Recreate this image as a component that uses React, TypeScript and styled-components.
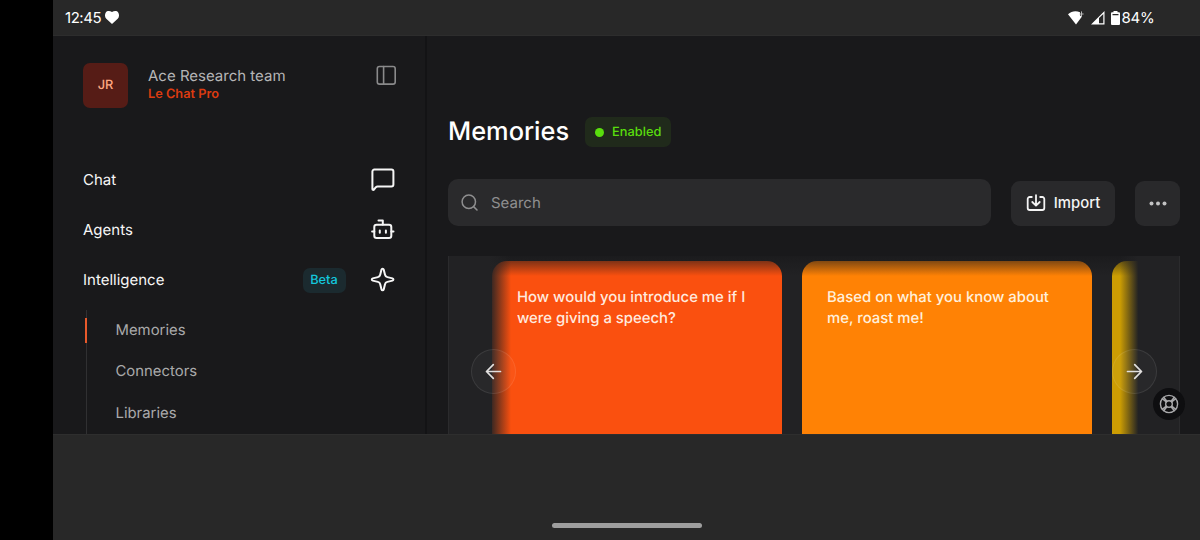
import React from "react";
import styled, { createGlobalStyle } from "styled-components";

const GlobalStyle = createGlobalStyle`
  * { box-sizing: border-box; }
  body {
    margin: 0;
    background: #000;
    font-family: Inter, "Liberation Sans", sans-serif;
    text-rendering: geometricPrecision;
    overflow: hidden;
  }
  svg { display: block; flex: none; fill: none; stroke: currentColor; stroke-linecap: round; stroke-linejoin: round; }
  h1, p, button { margin: 0; font: inherit; }
  button { border: 0; padding: 0; color: inherit; }
`;

const Device = styled.div`
  height: 540px;
  padding-left: 53px;
  display: grid;
  grid-template-rows: 36px 398px 106px;
`;

const StatusBar = styled.header`
  display: flex;
  align-items: center;
  justify-content: space-between;
  padding: 0 45.5px 0 12px;
  background: #282828;
  border-bottom: 1px solid #2d2d2d;
  color: #fff;
  font-size: 15px;
  line-height: 35px;
`;

const StatusGroup = styled.div<{ $gap: number }>`
  display: flex;
  align-items: center;
  gap: ${(p) => p.$gap}px;
`;

const StatusText = styled.span<{ $spacing: number }>`
  letter-spacing: ${(p) => p.$spacing}px;
`;

const Workspace = styled.div`
  display: grid;
  grid-template-columns: 374px 1fr;
  background: #19191b;
  min-height: 0;
  overflow: hidden;
`;

const Sidebar = styled.aside`
  border-right: 2px solid #131315;
  padding: 26.5px 30px 0;
  overflow: hidden;
`;

const Account = styled.div`
  display: flex;
  height: 46px;
  margin-bottom: 45.5px;
`;

const Avatar = styled.div`
  width: 45px;
  height: 45px;
  border-radius: 7px;
  margin-right: 20px;
  background: #561c16;
  color: #ffa781;
  font-size: 12.8px;
  font-weight: 500;
  line-height: 45px;
  text-align: center;
`;

const AccountText = styled.div`
  flex: 1;
  padding-top: 3px;
`;

const TeamName = styled.p`
  color: #b5b5b6;
  font-size: 15px;
  line-height: 19px;
`;

const Plan = styled.p`
  color: #dc3b10;
  font-size: 12.75px;
  font-weight: 600;
  line-height: 19px;
`;

const SidebarToggle = styled.button`
  display: flex;
  align-items: flex-start;
  margin: 2px -1.5px 0 0;
  background: none;
  color: #8a8a8b;
`;

const NavItem = styled.a`
  display: flex;
  align-items: center;
  height: 50px;
  color: #f6f6f6;
  font-size: 15px;
  svg { margin: 1px 0 0 auto; }
`;

const BetaTag = styled.span`
  margin: 2px 0 0 auto;
  width: 43px;
  border-radius: 7px;
  background: #1b2a2f;
  color: #13c6dc;
  font-size: 12.8px;
  font-weight: 500;
  line-height: 25px;
  text-align: center;
  & + svg { margin-left: 24.5px; }
`;

const SubNav = styled.div`
  display: flex;
  flex-direction: column;
  margin: 5.5px 0 0 2.5px;
  padding-bottom: 10px;
  border-left: 1px solid #303032;
`;

const SubItem = styled.a<{ $active?: boolean }>`
  height: 41.3px;
  display: flex;
  align-items: center;
  color: #a9a9aa;
  font-size: 14.88px;
  &::before {
    content: "";
    width: 2px;
    height: 25px;
    margin: 0 29px 0 -2px;
    background: ${(p) => (p.$active ? "#e8592b" : "transparent")};
  }
`;

const Main = styled.main`
  display: flex;
  flex-direction: column;
  padding: 80px 20px 0 21px;
  min-width: 0;
`;

const TitleRow = styled.div`
  display: flex;
  align-items: center;
  gap: 15.5px;
  height: 31px;
`;

const Title = styled.h1`
  color: #fff;
  font-size: 25.4px;
  font-weight: 500;
  line-height: 31px;
`;

const EnabledTag = styled.span`
  display: flex;
  align-items: center;
  gap: 8px;
  height: 30px;
  padding: 1px 10px 0 10.5px;
  border-radius: 7px;
  background: #202a1b;
  color: #59de0d;
  font-size: 12.8px;
  font-weight: 500;
  &::before {
    content: "";
    width: 9px;
    height: 9px;
    border-radius: 50%;
    background: currentColor;
  }
`;

const Toolbar = styled.div`
  display: flex;
  align-items: center;
  gap: 20px;
  height: 47px;
  margin-top: 32px;
`;

const SearchField = styled.div`
  flex: 1;
  height: 47px;
  display: flex;
  align-items: center;
  gap: 13px;
  padding-left: 13px;
  border-radius: 10px;
  background: #2a2a2c;
  color: #8f8f90;
  font-size: 15px;
`;

const ToolButton = styled.button<{ $width: number; $color: string }>`
  width: ${(p) => p.$width}px;
  height: 45px;
  display: flex;
  align-items: center;
  justify-content: center;
  gap: 8px;
  margin-top: 1px;
  border-radius: 9px;
  background: #29292b;
  color: ${(p) => p.$color};
  font-size: 14.88px;
  font-weight: 500;
`;

const Carousel = styled.section`
  position: relative;
  flex: 1;
  min-height: 0;
  margin-top: 30px;
  padding: 5px 0 0 43px;
  overflow: hidden;
  background: #222224;
  border: 1px solid #2b2b2d;
  border-width: 0 1px;
`;

const Track = styled.div`
  display: flex;
  gap: 20px;
  height: 100%;
`;

const Card = styled.article<{ $color: string; $text: string }>`
  flex: 0 0 290px;
  padding: 26px 25px 0;
  border-radius: 15px 15px 0 0;
  background: ${(p) => p.$color};
  color: ${(p) => p.$text};
  font-size: 14.88px;
  font-weight: 500;
  line-height: 21.3px;
`;

const TopFade = styled.div`
  position: absolute;
  inset: 0 -1px auto;
  height: 20px;
  background: linear-gradient(#19191bbb, #19191b00);
`;

const SideFade = styled.div<{ $side: "left" | "right" }>`
  position: absolute;
  top: 0;
  bottom: 0;
  ${(p) => p.$side}: 0;
  width: ${(p) => (p.$side === "left" ? 62 : 59)}px;
  background: linear-gradient(
    to ${(p) => (p.$side === "left" ? "right" : "left")},
    #222224 ${(p) => (p.$side === "left" ? 65 : 69)}%,
    #22222400
  );
`;

const RoundButton = styled.button<{ $side: "left" | "right" }>`
  position: absolute;
  top: 92.5px;
  ${(p) => p.$side}: 22px;
  width: 45px;
  height: 45px;
  display: grid;
  place-items: center;
  border: 1px solid #ffffff16;
  border-radius: 50%;
  background: #ffffff08;
  color: #e2e0df;
`;

const HelpButton = styled.button`
  position: absolute;
  left: 1153px;
  top: 388px;
  width: 32px;
  height: 32px;
  display: grid;
  place-items: center;
  border-radius: 50%;
  background: #0e0e10;
  color: #a9a9ab;
`;

const GestureArea = styled.footer`
  display: flex;
  align-items: flex-end;
  justify-content: center;
  padding: 0 0 12px 0;
  background: #282828;
  border-top: 1px solid #2e2e2e;
`;

const GestureHandle = styled.div`
  width: 150px;
  height: 5.5px;
  border-radius: 3px;
  background: #9e9e9e;
`;

const HeartIcon = () => (
  <svg width="14" height="13" viewBox="0 0 14 13">
    <path fill="#fff" stroke="none" d="M7 13 1.300 7.800C-.3 6.200-.4 3.200.8 1.400 2-.4 5-.4 7 1.100 9-.4 12-.4 13.200 1.400 14.400 3.200 14.300 6.200 12.700 7.800z" />
  </svg>
);

const WifiIcon = () => (
  <svg width="16" height="14" viewBox="0 0 16 14">
    <path fill="#fff" stroke="none" d="M0 3.300C3.500-.1 8-.6 12 1.200v3.300l2 1L8 13.500z" />
    <path stroke="#bbb" strokeWidth="1" d="M13.500.8v4.400M11.800 3h3.400" />
  </svg>
);

const SignalIcon = () => (
  <svg width="14" height="14" viewBox="0 0 14 14">
    <path fill="#fff" stroke="none" d="M0 13.500 13.500 0v13.500zM8 7v5.300h4.300V2.900z" fillRule="evenodd" />
  </svg>
);

const BatteryIcon = () => (
  <svg width="9" height="14" viewBox="0 0 9 14">
    <path fill="#fff" fillRule="evenodd" stroke="none" d="M2.500 0h4v1.300H8a1 1 0 0 1 1 1V13a1 1 0 0 1-1 1H1a1 1 0 0 1-1-1V2.300a1 1 0 0 1 1-1h1.500zM1.500 3v1.200h6V3z" />
  </svg>
);

const PanelIcon = () => (
  <svg width="21" height="21" viewBox="0 0 21 21" strokeWidth="1.6">
    <rect x="1.300" y="1.500" width="17.900" height="17.600" rx="2.200" />
    <path d="M7.600 1.500v17.600" />
  </svg>
);

const ChatIcon = () => (
  <svg width="25" height="25" viewBox="0 0 25 25" strokeWidth="2">
    <path d="M4.400 2.500h17a2 2 0 0 1 2 2v13a2 2 0 0 1-2 2H7.500c-.7 0-1.100.2-1.600.7l-1.900 2.300c-.6.700-1.600.4-1.600-.6V4.500a2 2 0 0 1 2-2z" />
  </svg>
);

const BotIcon = () => (
  <svg width="25" height="25" viewBox="0 0 25 25" strokeWidth="2">
    <rect x="4.300" y="7.700" width="17" height="13.400" rx="2.300" />
    <path d="M8.500 3.600h4.300v4M2.100 14.400h2.200M21.300 14.400h2.200M9.800 13.400v2.300M15.900 13.400v2.300" />
  </svg>
);

const SparkleIcon = () => (
  <svg width="25" height="25" viewBox="0 0 25 25" strokeWidth="2">
    <path d="M11.500 2.600c.3-1.200 1.900-1.200 2.200 0l1.300 5.200c.3 1.300 1 2 2.300 2.300l5.200 1.300c1.200.3 1.200 1.900 0 2.200l-5.200 1.300c-1.300.3-2 1-2.300 2.300l-1.300 5.200c-.3 1.200-1.900 1.200-2.200 0l-1.300-5.200c-.3-1.300-1-2-2.300-2.300l-5.200-1.300c-1.200-.3-1.200-1.900 0-2.200l5.200-1.300c1.300-.3 2-1 2.300-2.300z" />
  </svg>
);

const SearchIcon = () => (
  <svg width="17" height="17" viewBox="0 0 17 17" strokeWidth="1.500">
    <circle cx="7.800" cy="7.800" r="6.700" />
    <path d="m12.600 12.600 3.400 3.400" />
  </svg>
);

const ImportIcon = () => (
  <svg width="20" height="18" viewBox="0 0 20 18" strokeWidth="1.800">
    <path d="M5.800 3H3.700a2 2 0 0 0-2 2v9a2 2 0 0 0 2 2h12.600a2 2 0 0 0 2-2V5a2 2 0 0 0-2-2h-2.100M10 1.200v10.300M6.300 8 10 11.700 13.700 8" />
  </svg>
);

const DotsIcon = () => (
  <svg width="18" height="5" viewBox="0 0 18 5">
    {[2.5, 9, 15.5].map((x) => (
      <circle key={x} cx={x} cy="2.500" r="2" fill="#c2c2c3" stroke="none" />
    ))}
  </svg>
);

const ArrowIcon = ({ d }: { d: string }) => (
  <svg width="17" height="17" viewBox="0 0 17 17" strokeWidth="1.700">
    <path d={d} />
  </svg>
);

const BuoyIcon = () => (
  <svg width="20" height="20" viewBox="0 0 20 20" strokeWidth="1.400">
    <circle cx="10" cy="10" r="8.600" />
    <circle cx="10" cy="10" r="3.300" />
    <path d="m3.300 4.700 4 3.200M4.700 3.300l3.200 4M16.700 4.700l-4 3.200M15.300 3.300l-3.200 4M16.700 15.300l-4-3.200M15.300 16.700l-3.200-4M3.300 15.300l4-3.200M4.700 16.700l3.200-4" />
  </svg>
);

export default function App() {
  return (
    <>
      <GlobalStyle />
      <Device>
        <StatusBar>
          <StatusGroup $gap={4}>
            <StatusText $spacing={-0.45}>12:45</StatusText>
            <HeartIcon />
          </StatusGroup>
          <StatusGroup $gap={6.5}>
            <WifiIcon />
            <SignalIcon />
            <StatusGroup $gap={1}>
              <BatteryIcon />
              <StatusText $spacing={-0.2}>84%</StatusText>
            </StatusGroup>
          </StatusGroup>
        </StatusBar>
        <Workspace>
          <Sidebar>
            <Account>
              <Avatar>JR</Avatar>
              <AccountText>
                <TeamName>Ace Research team</TeamName>
                <Plan>Le Chat Pro</Plan>
              </AccountText>
              <SidebarToggle aria-label="Toggle sidebar">
                <PanelIcon />
              </SidebarToggle>
            </Account>
            <nav>
              <NavItem>Chat<ChatIcon /></NavItem>
              <NavItem>Agents<BotIcon /></NavItem>
              <NavItem>
                Intelligence
                <BetaTag>Beta</BetaTag>
                <SparkleIcon />
              </NavItem>
              <SubNav>
                <SubItem $active>Memories</SubItem>
                <SubItem>Connectors</SubItem>
                <SubItem>Libraries</SubItem>
              </SubNav>
            </nav>
          </Sidebar>
          <Main>
            <TitleRow>
              <Title>Memories</Title>
              <EnabledTag>Enabled</EnabledTag>
            </TitleRow>
            <Toolbar>
              <SearchField>
                <SearchIcon />
                Search
              </SearchField>
              <ToolButton $width={104} $color="#f4f4f4">
                <ImportIcon />
                Import
              </ToolButton>
              <ToolButton $width={45} $color="#c2c2c3" aria-label="More">
                <DotsIcon />
              </ToolButton>
            </Toolbar>
            <Carousel>
              <Track>
                <Card $color="#fa500f" $text="#ffeadf">How would you introduce me if I were giving a speech?</Card>
                <Card $color="#ff8205" $text="#fff0dc">Based on what you know about me, roast me!</Card>
                <Card $color="#cc9d03" $text="#fff0dc" />
              </Track>
              <TopFade />
              <SideFade $side="left" />
              <SideFade $side="right" />
              <RoundButton $side="left" aria-label="Previous">
                <ArrowIcon d="M15.500 8.500h-14M8.300 1.700 1.500 8.500l6.800 6.800" />
              </RoundButton>
              <RoundButton $side="right" aria-label="Next">
                <ArrowIcon d="M1.500 8.500h14M8.700 1.700l6.800 6.800-6.800 6.800" />
              </RoundButton>
            </Carousel>
          </Main>
        </Workspace>
        <GestureArea>
          <GestureHandle />
        </GestureArea>
        <HelpButton aria-label="Help">
          <BuoyIcon />
        </HelpButton>
      </Device>
    </>
  );
}
